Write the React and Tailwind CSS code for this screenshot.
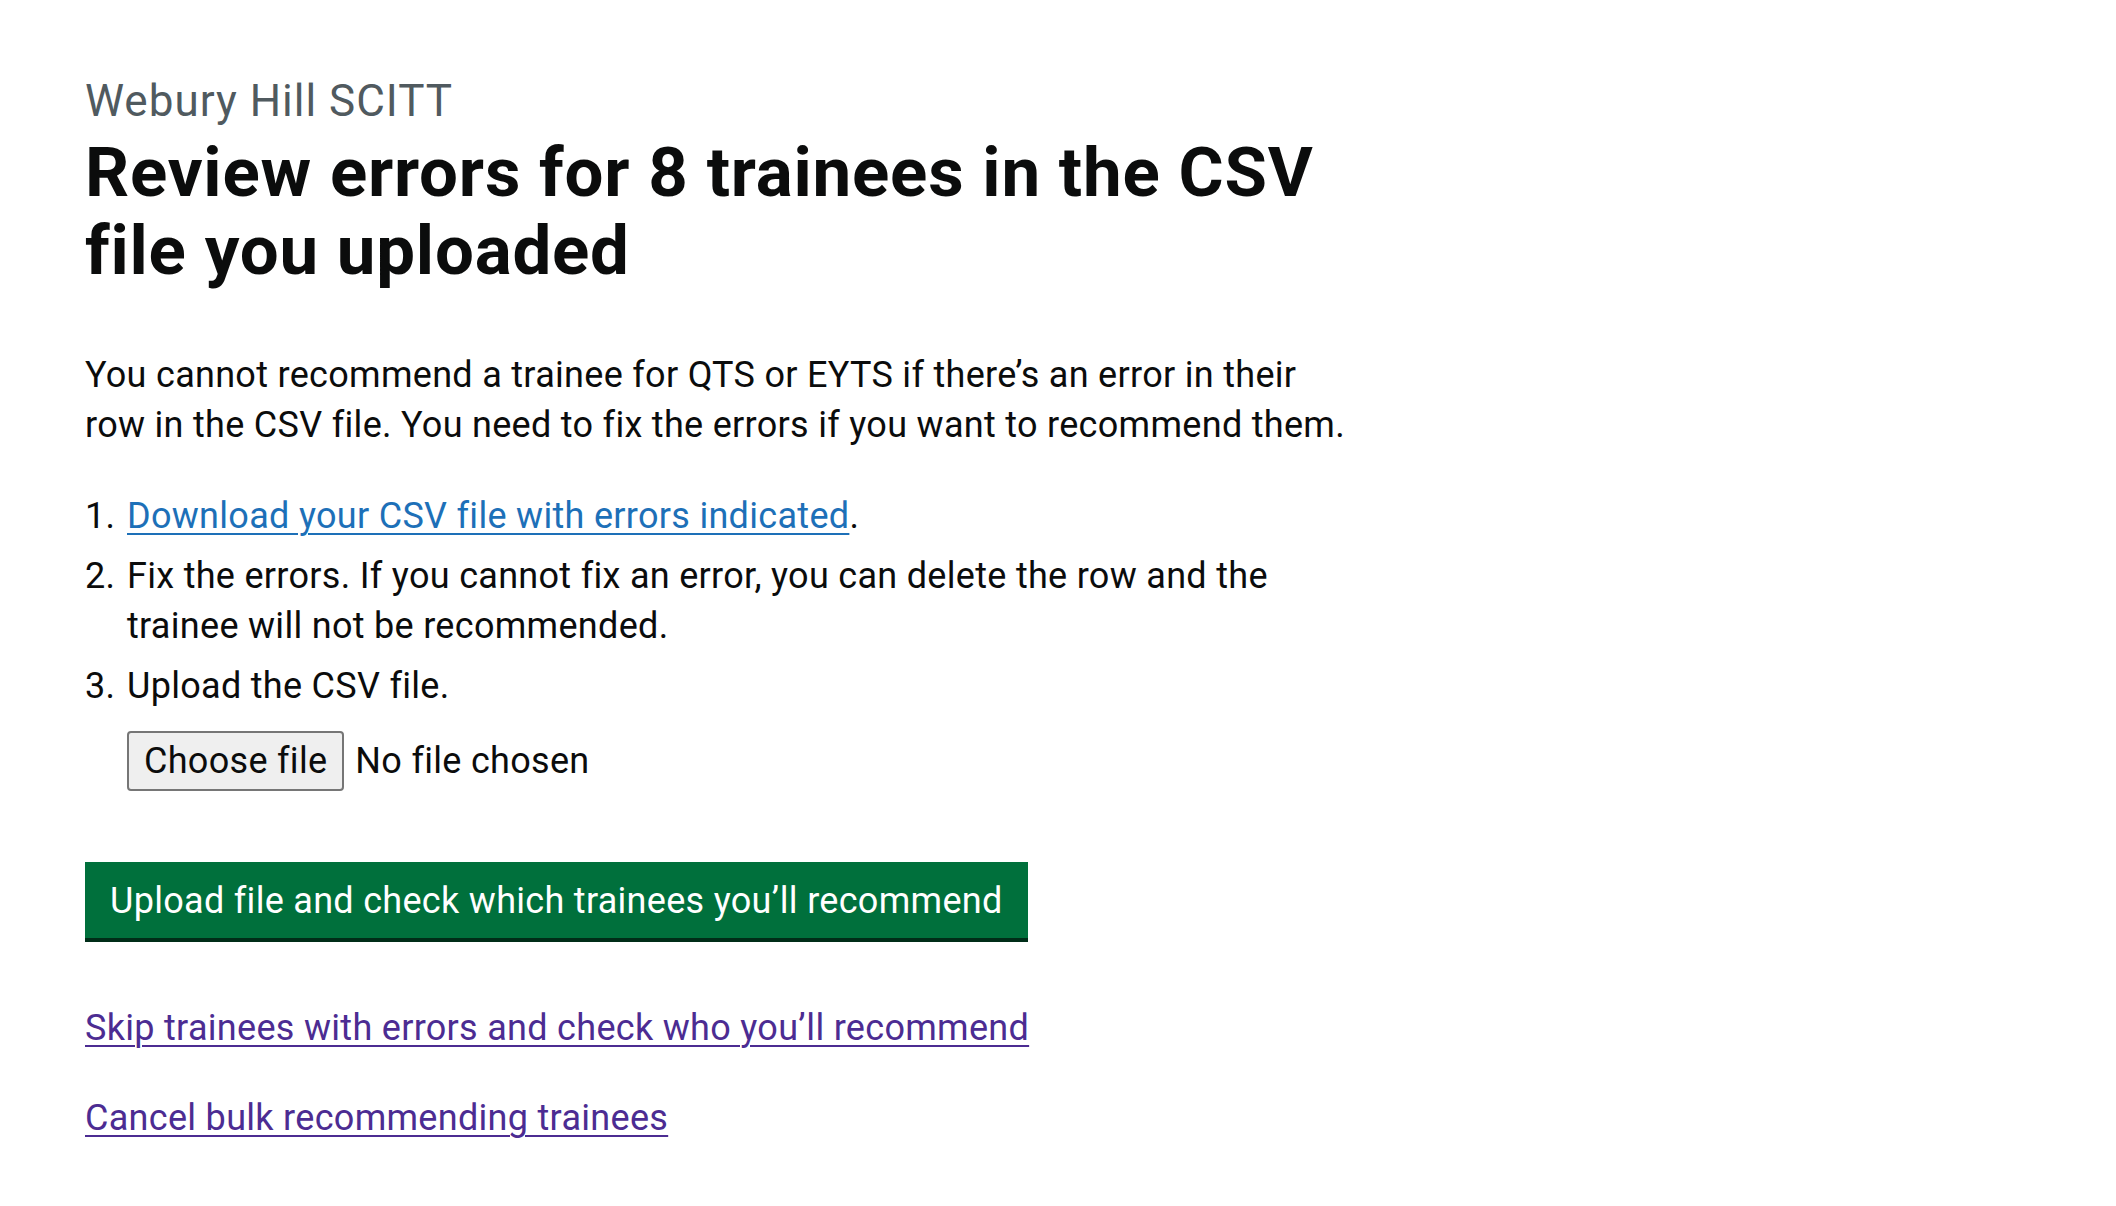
import React from 'react';

/**
 * ReviewErrors page
 * Bulk recommend: trainees with CSV errors
 */
const ReviewErrors = () => {
  const steps = [
    {
      id: 1,
      content: (
        <>
          <a
            href="#download"
            className="text-[#1d70b8] underline decoration-2 underline-offset-[5px]"
          >
            Download your CSV file with errors indicated
          </a>
          .
        </>
      ),
    },
    {
      id: 2,
      content:
        'Fix the errors. If you cannot fix an error, you can delete the row and the trainee will not be recommended.',
    },
    { id: 3, content: 'Upload the CSV file.' },
  ];

  return (
    <div className="min-h-screen bg-white text-[#0b0c0c] font-['Roboto',sans-serif]">
      <main className="pl-[85px] pt-[76px] pb-[60px]">
        <div className="w-[1270px]">
          {/* Heading */}
          <span className="block text-[44px] leading-[50px] tracking-[1px] text-[#505a5f]">Webury Hill SCITT</span>
          <h1 className="mt-[8px] text-[69px] leading-[78px] font-bold tracking-[0.8px]">
            Review errors for 8 trainees in the CSV file you uploaded
          </h1>

          <p className="mt-[60px] text-[36px] leading-[50px] tracking-[0.3px]">
            You cannot recommend a trainee for QTS or EYTS if there’s an error in their row in the CSV file. You need to fix the errors if you want to recommend them.
          </p>

          {/* Steps */}
          <ol className="mt-[41px] flex flex-col gap-[10px] text-[36px] leading-[50px] tracking-[0.3px]">
            {steps.map((step) => (
              <li key={step.id} className="flex">
                <span className="w-[42px] shrink-0">{step.id}.</span>
                <div className="flex-1">
                  <div>{step.content}</div>
                  {step.id === 3 && (
                    <div className="mt-[20px] flex items-center gap-[11px]">
                      <button className="h-[60px] px-[15px] rounded-[4px] border-2 border-[#767676] bg-[#efefef] text-[36px] leading-none tracking-[0.3px]">
                        Choose file
                      </button>
                      <span>No file chosen</span>
                    </div>
                  )}
                </div>
              </li>
            ))}
          </ol>

          {/* Actions */}
          <button className="mt-[71px] block bg-[#00703c] text-white text-[36px] leading-[50px] tracking-[0.3px] pt-[14px] pb-[12px] px-[25px] shadow-[0_4px_0_#002d18]">
            Upload file and check which trainees you’ll recommend
          </button>

          <div className="mt-[65px] flex flex-col items-start gap-[40px] text-[36px] leading-[50px] tracking-[0.3px]">
            <a href="#skip" className="text-[#4c2c92] underline decoration-2 underline-offset-[5px]">
              Skip trainees with errors and check who you’ll recommend
            </a>
            <a href="#cancel" className="text-[#4c2c92] underline decoration-2 underline-offset-[5px]">
              Cancel bulk recommending trainees
            </a>
          </div>
        </div>
      </main>
    </div>
  );
};

export default function App() {
  return <ReviewErrors />;
}
